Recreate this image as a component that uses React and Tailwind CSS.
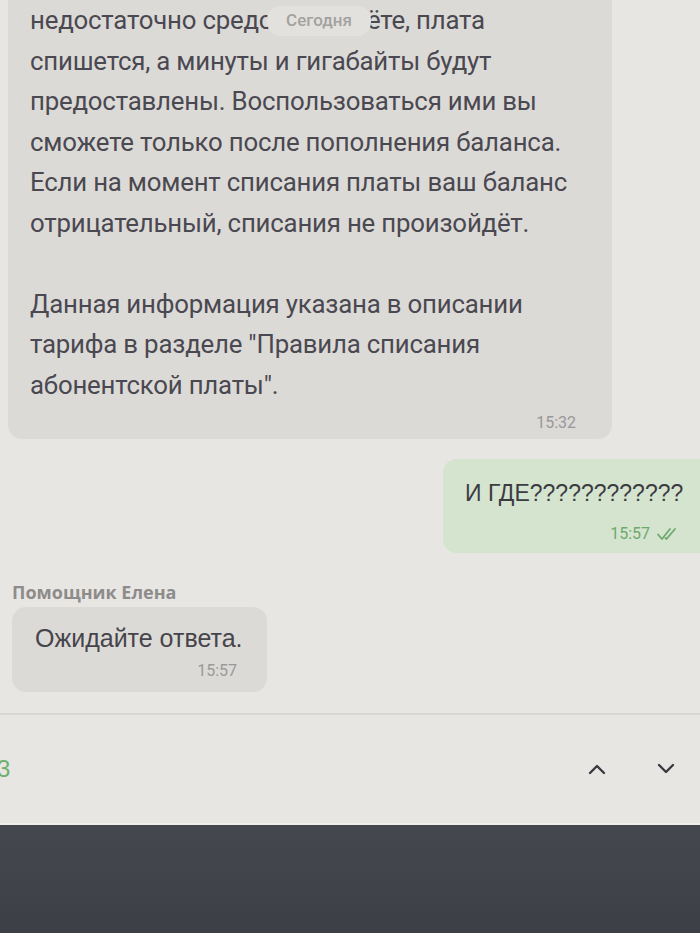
import React from "react";

const lines1 = [
  "недостаточно средств на счёте, плата",
  "спишется, а минуты и гигабайты будут",
  "предоставлены. Воспользоваться ими вы",
  "сможете только после пополнения баланса.",
  "Если на момент списания платы ваш баланс",
  "отрицательный, списания не произойдёт.",
  "\u00a0",
  "Данная информация указана в описании",
  "тарифа в разделе \"Правила списания",
  "абонентской платы\".",
];

export default function App() {
  return (
    <div
      className="w-[700px] h-[933px] flex flex-col overflow-hidden bg-[#e8e6e3] text-[#4a4850]"
      style={{ fontFamily: "Roboto, 'Liberation Sans', sans-serif" }}
    >
      <div className="h-[713px] flex flex-col relative">
        {/* Top operator bubble (scrolled) */}
        <div className="ml-[8px] w-[604px] bg-[#dcdad7] rounded-b-[14px] pl-[22px] pr-[16px] pb-[6px]">
          <div className="text-[25.8px] leading-[40.5px] tracking-[-0.2px]">
            {lines1.map((l, i) => (
              <div key={i} className="whitespace-nowrap">{l}</div>
            ))}
          </div>
          <div className="flex justify-end pr-[20px] mt-[8px] h-[20px] items-center text-[16px] text-[#9a9898]">
            15:32
          </div>
        </div>

        {/* Date badge */}
        <div className="absolute left-[267px] top-[6px] h-[30px] w-[104px] justify-center rounded-[14px] bg-[#e3e1de] flex items-center text-[17px] font-medium text-[#a3a1a0]">
          Сегодня
        </div>

        {/* User bubble */}
        <div className="mt-[20px] ml-auto w-[257px] h-[94px] bg-[#d4e4cf] rounded-l-[14px] pl-[22px] pt-[20px]">
          <div
            className="text-[23px] leading-[28px] text-[#3d3b42] whitespace-nowrap"
            style={{ fontFamily: "'Liberation Sans', Arial, sans-serif" }}
          >
            И ГДЕ????????????
          </div>
          <div className="flex items-center justify-end pr-[20px] mt-[15px] gap-[6px] text-[16px] text-[#6fa86e]">
            <span>15:57</span>
            <svg width="24" height="14" viewBox="0 0 24 14" fill="none" stroke="#6fa86e" strokeWidth="1.8" strokeLinecap="round" strokeLinejoin="round">
              <path d="M2 7.5 L6 12 L14 2" />
              <path d="M9.5 11 L10.5 12 L19 2" />
            </svg>
          </div>
        </div>

        {/* Operator name */}
        <div
          className="mt-[29px] ml-[12px] text-[18px] font-bold leading-[20px] text-[#8e8c8b]"
          style={{ fontFamily: "'Open Sans', 'Liberation Sans', sans-serif" }}
        >
          Помощник Елена
        </div>

        {/* Operator bubble 2 */}
        <div className="mt-[5px] ml-[12px] w-[255px] h-[85px] bg-[#dcdad7] rounded-[14px] pl-[23px] pt-[17px]">
          <div
            className="text-[25px] leading-[28px] text-[#46444b] whitespace-nowrap"
            style={{ fontFamily: "'Liberation Sans', Arial, sans-serif" }}
          >
            Ожидайте ответа.
          </div>
          <div className="flex justify-end pr-[30px] mt-[7px] text-[16px] text-[#9a9898]">
            15:57
          </div>
        </div>
      </div>

      {/* Search footer */}
      <div className="h-[110px] border-t-[2px] border-[#d8d6d3] flex items-center bg-[#e8e6e3]">
        <span className="ml-[-3px] text-[24px] text-[#6fb06e]" style={{ fontFamily: "'Liberation Sans', sans-serif" }}>3</span>
        <div className="ml-auto flex items-center gap-[49px] mr-[24px]">
          <svg width="20" height="12" viewBox="0 0 20 12" fill="none" stroke="#3b3940" strokeWidth="2.4" strokeLinecap="round" strokeLinejoin="round">
            <path d="M3 10 L10 3 L17 10" />
          </svg>
          <svg width="20" height="12" viewBox="0 0 20 12" fill="none" stroke="#3b3940" strokeWidth="2.4" strokeLinecap="round" strokeLinejoin="round">
            <path d="M3 2 L10 9 L17 2" />
          </svg>
        </div>
      </div>

      {/* Dark bezel */}
      <div className="flex-1 bg-gradient-to-b from-[#45484f] to-[#3c3f46] border-t-[2px] border-[#f0eeeb]" />
    </div>
  );
}
